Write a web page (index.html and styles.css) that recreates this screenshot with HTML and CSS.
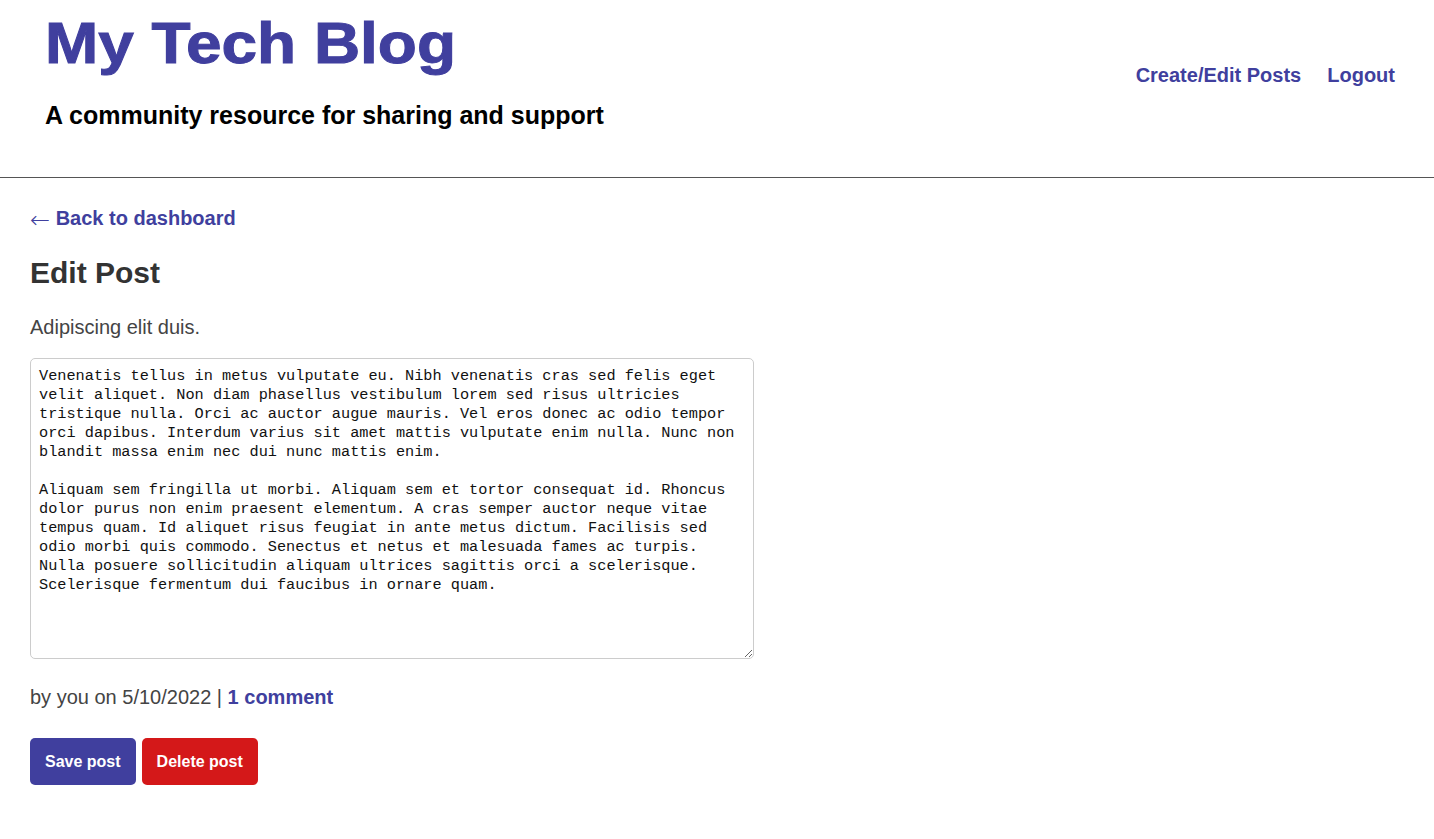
FILE: index.html
```html
<!DOCTYPE html>
<html lang="en">
<head>
<meta charset="utf-8">
<title>My Tech Blog</title>
<link rel="stylesheet" href="styles.css">
</head>
<body>
<header class="site-header">
  <div class="brand">
    <h1 class="brand-title">My Tech Blog</h1>
    <h2 class="brand-tagline">A community resource for sharing and support</h2>
  </div>
  <nav class="site-nav">
    <a href="#" class="nav-link">Create/Edit Posts</a>
    <a href="#" class="nav-link">Logout</a>
  </nav>
</header>
<main class="content">
  <a href="#" class="back-link"><span class="arrow">&larr;</span> Back to dashboard</a>
  <h2 class="page-title">Edit Post</h2>
  <p class="post-title">Adipiscing elit duis.</p>
  <textarea class="post-body">Venenatis tellus in metus vulputate eu. Nibh venenatis cras sed felis eget velit aliquet. Non diam phasellus vestibulum lorem sed risus ultricies tristique nulla. Orci ac auctor augue mauris. Vel eros donec ac odio tempor orci dapibus. Interdum varius sit amet mattis vulputate enim nulla. Nunc non blandit massa enim nec dui nunc mattis enim.

Aliquam sem fringilla ut morbi. Aliquam sem et tortor consequat id. Rhoncus dolor purus non enim praesent elementum. A cras semper auctor neque vitae tempus quam. Id aliquet risus feugiat in ante metus dictum. Facilisis sed odio morbi quis commodo. Senectus et netus et malesuada fames ac turpis. Nulla posuere sollicitudin aliquam ultrices sagittis orci a scelerisque. Scelerisque fermentum dui faucibus in ornare quam.</textarea>
  <p class="post-meta">by you on 5/10/2022 | <a href="#" class="meta-link">1 comment</a></p>
  <div class="actions">
    <button class="btn btn-save">Save post</button>
    <button class="btn btn-delete">Delete post</button>
  </div>
</main>
</body>
</html>
```
FILE: styles.css
```css
* { box-sizing: border-box; }
body {
  margin: 0;
  font-family: "Liberation Sans", Arial, sans-serif;
  color: #333;
  background: #fff;
}
a { text-decoration: none; color: #403f9e; }
.site-header {
  display: flex;
  justify-content: space-between;
  align-items: center;
  padding: 0 39px 0 45px;
  height: 178px;
  border-bottom: 1px solid #555;
}
.brand { align-self: flex-start; }
.brand-title {
  margin: 11px 0 0 0;
  font-size: 57px;
  line-height: 64px;
  color: #403f9e;
  font-weight: bold;
  -webkit-text-stroke: 1px #403f9e;
  transform: scaleX(1.122);
  transform-origin: left center;
  white-space: nowrap;
}
.brand-tagline {
  margin: 26px 0 0 0;
  font-size: 25px;
  line-height: 29px;
  color: #000;
  font-weight: bold;
}
.site-nav {
  display: flex;
  gap: 26px;
  margin-top: -27px;
}
.nav-link {
  font-weight: bold;
  font-size: 20px;
}
.content {
  padding: 28px 30px;
}
.back-link {
  display: inline-block;
  font-weight: bold;
  font-size: 20px;
  line-height: 24px;
}
.arrow {
  font-family: "DejaVu Sans", sans-serif;
  font-weight: 200;
  font-size: 24px;
  line-height: 20px;
  vertical-align: -3px;
}
.page-title {
  margin: 26px 0 0 0;
  font-size: 30px;
  line-height: 34px;
  color: #333;
}
.post-title {
  margin: 25px 0 0 0;
  font-size: 20px;
  line-height: 24px;
  color: #444;
}
.post-body {
  display: block;
  margin-top: 19px;
  width: 724px;
  height: 301px;
  padding: 8px 8px 7px 8px;
  border: 1px solid #cccccc;
  border-radius: 5px;
  font-family: "Liberation Mono", "DejaVu Sans Mono", monospace;
  font-size: 15.25px;
  line-height: 19px;
  color: #111;
  resize: both;
}
.post-body:focus { outline: none; }
.post-meta {
  margin: 26px 0 0 0;
  font-size: 20px;
  line-height: 24px;
  color: #444;
}
.meta-link { font-weight: bold; }
.actions {
  display: flex;
  gap: 6px;
  margin-top: 29px;
}
.btn {
  border: none;
  border-radius: 5px;
  color: #fff;
  font-family: "Liberation Sans", Arial, sans-serif;
  font-weight: bold;
  font-size: 16px;
  height: 47px;
  padding: 0 15px;
}
.btn-save { background: #403f9e; }
.btn-delete { background: #d41819; }
```
